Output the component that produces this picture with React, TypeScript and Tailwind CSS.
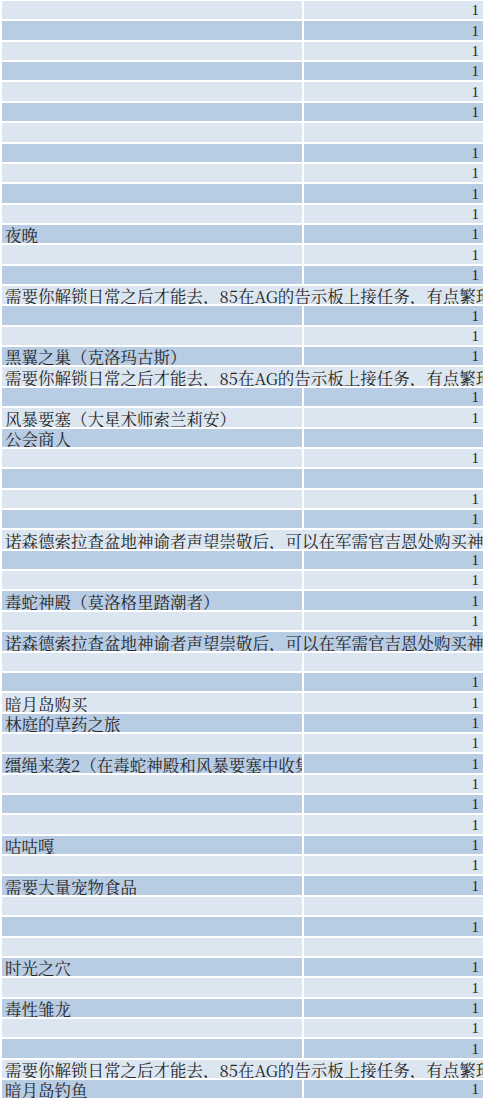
import React from "react";

type Row = { a?: string; b?: string; span?: boolean; clip?: boolean };

const LONG1 = "需要你解锁日常之后才能去，85在AG的告示板上接任务，有点繁琐";
const LONG2 = "诺森德索拉查盆地神谕者声望崇敬后，可以在军需官吉恩处购买神";

const rows: Row[] = [
  { b: "1" },
  { b: "1" },
  { b: "1" },
  { b: "1" },
  { b: "1" },
  { b: "1" },
  {},
  { b: "1" },
  { b: "1" },
  { b: "1" },
  { b: "1" },
  { a: "夜晚", b: "1" },
  { b: "1" },
  { b: "1" },
  { a: LONG1, span: true },
  { b: "1" },
  { b: "1" },
  { a: "黑翼之巢（克洛玛古斯）", b: "1" },
  { a: LONG1, span: true },
  { b: "1" },
  { a: "风暴要塞（大星术师索兰莉安）", b: "1" },
  { a: "公会商人" },
  { b: "1" },
  {},
  { b: "1" },
  { b: "1" },
  { a: LONG2, span: true },
  { b: "1" },
  { b: "1" },
  { a: "毒蛇神殿（莫洛格里踏潮者）", b: "1" },
  { b: "1" },
  { a: LONG2, span: true },
  {},
  { b: "1" },
  { a: "暗月岛购买", b: "1" },
  { a: "林庭的草药之旅", b: "1" },
  { b: "1" },
  { a: "缰绳来袭2（在毒蛇神殿和风暴要塞中收集", b: "1", clip: true },
  { b: "1" },
  { b: "1" },
  { b: "1" },
  { a: "咕咕嘎", b: "1" },
  { b: "1" },
  { a: "需要大量宠物食品", b: "1" },
  {},
  { b: "1" },
  {},
  { a: "时光之穴", b: "1" },
  { b: "1" },
  { a: "毒性雏龙", b: "1" },
  { b: "1" },
  { b: "1" },
  { a: LONG1, span: true },
  { a: "暗月岛钓鱼", b: "1" },
];

const cjk = "font-['SimSun','Noto_Serif_CJK_SC','Noto_Sans_CJK_SC',serif]";

export default function App() {
  return (
    <div className="w-[483px] h-[1101px] overflow-hidden bg-white pt-[1px] pl-[2px] flex flex-col gap-[2px]">
      {rows.map((r, i) => {
        const bg = i % 2 === 0 ? "bg-[#dce6f1]" : "bg-[#b8cce4]";
        if (r.span) {
          return (
            <div
              key={i}
              className={`h-[18.36px] shrink-0 flex items-end overflow-hidden whitespace-nowrap ${bg}`}
            >
              <span className={`pl-[3px] text-[16.5px] leading-[16px] text-[#262626] ${cjk}`}>{r.a}</span>
            </div>
          );
        }
        return (
          <div key={i} className="h-[18.36px] shrink-0 flex gap-[2px]">
            <div className={`w-[300px] shrink-0 flex items-end overflow-hidden whitespace-nowrap ${bg}`}>
              {r.a && (
                <span className={`pl-[3px] text-[16.5px] leading-[16px] text-[#262626] ${cjk}`}>{r.a}</span>
              )}
            </div>
            <div className={`flex-1 flex items-end justify-end pr-[4px] ${bg}`}>
              {r.b && (
                <span className="text-[15px] leading-[18px] text-[#262626] font-['Liberation_Serif',serif]">
                  {r.b}
                </span>
              )}
            </div>
          </div>
        );
      })}
    </div>
  );
}
